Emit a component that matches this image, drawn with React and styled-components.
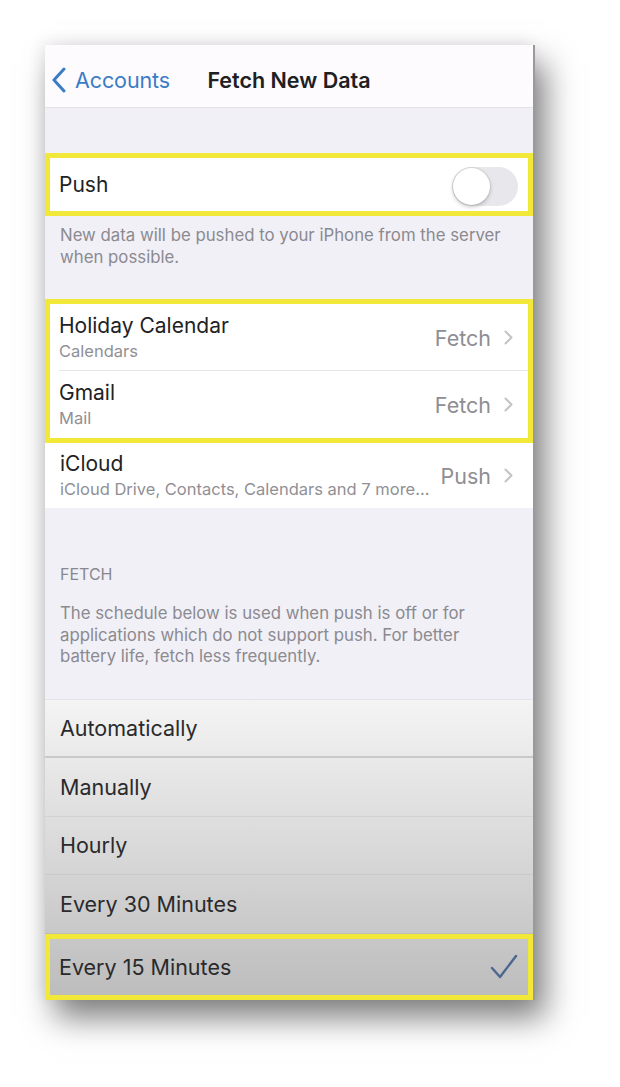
import React from "react";
import styled, { createGlobalStyle } from "styled-components";

const GlobalStyle = createGlobalStyle`
  html, body { margin: 0; padding: 0; background: #ffffff; }
  body { font-family: Inter, "Noto Sans", "Liberation Sans", sans-serif; -webkit-font-smoothing: antialiased; }
  * { box-sizing: border-box; }
`;

const Page = styled.div`
  width: 620px;
  height: 1087px;
  padding: 45px 0 0 45px;
  background: #ffffff;
  overflow: hidden;
`;

const Phone = styled.div`
  width: 490px;
  height: 955px;
  background: #f1f0f6;
  display: flex;
  flex-direction: column;
  overflow: hidden;
  border-right: 2px solid #9a9a9a;
  box-shadow: 10px 18px 30px rgba(0, 0, 0, 0.5), -3px -3px 14px rgba(0, 0, 0, 0.07);
`;

const NavBar = styled.div`
  height: 63px;
  flex: none;
  background: #fdfbfe;
  border-bottom: 1px solid #e2e1e6;
  display: grid;
  grid-template-columns: 1fr auto 1fr;
  align-items: center;
  padding: 7px 6px 0;
`;

const BackButton = styled.div`
  display: flex;
  align-items: center;
  gap: 8px;
  color: #3b7cc6;
  font-size: 21.5px;
  letter-spacing: -0.1px;
`;

const NavTitle = styled.div`
  font-size: 21.5px;
  font-weight: 600;
  color: #202022;
  letter-spacing: 0px;
`;

const Spacer = styled.div`
  height: ${(p) => p.$h}px;
  flex: none;
`;

const Highlight = styled.div`
  border: 5px solid #f2e83a;
  background: #ffffff;
  flex: none;
`;

const SingleRow = styled.div`
  height: ${(p) => p.$h}px;
  display: flex;
  align-items: center;
  justify-content: space-between;
  padding: 0 10px 0 9px;
  background: #ffffff;
`;

const Label = styled.div`
  font-size: 21px;
  color: #222224;
`;

const Toggle = styled.div`
  width: 66px;
  height: 39px;
  border-radius: 20px;
  background: #e8e7ec;
  position: relative;
  margin-top: 4px;
`;

const Knob = styled.div`
  position: absolute;
  left: 1px;
  top: 1px;
  width: 37px;
  height: 37px;
  border-radius: 50%;
  background: #ffffff;
  box-shadow: 0 2px 4px rgba(0, 0, 0, 0.22), 0 0 0 1px rgba(0, 0, 0, 0.06);
`;

const Footer = styled.div`
  padding: ${(p) => p.$pad};
  font-size: 16.8px;
  line-height: 21.5px;
  color: #8b8a90;
  flex: none;
`;

const SectionHeader = styled.div`
  padding: 0 15px;
  font-size: 16px;
  line-height: 20px;
  color: #89888e;
  flex: none;
`;

const AccountRow = styled.div`
  height: ${(p) => p.$h}px;
  display: flex;
  align-items: center;
  justify-content: space-between;
  gap: 4px;
  padding: 0 ${(p) => p.$pr}px 0 ${(p) => p.$pl}px;
  background: #ffffff;
  position: relative;
  ${(p) =>
    p.$sep &&
    `&::after { content: ""; position: absolute; left: ${p.$pl}px; right: 0; bottom: 0; height: 1px; background: #e6e5ea; }`}
`;

const AccountText = styled.div`
  display: flex;
  flex-direction: column;
  gap: 3px;
  min-width: 0;
  margin-top: -2px;
`;

const AccountTitle = styled.div`
  font-size: 21px;
  color: #222224;
  line-height: 25px;
`;

const AccountSub = styled.div`
  font-size: 16.5px;
  color: #909095;
  line-height: 20px;
  white-space: nowrap;
  overflow: hidden;
`;

const Detail = styled.div`
  display: flex;
  align-items: center;
  gap: 13px;
  font-size: 21.5px;
  color: #8e8e93;
  flex: none;
`;

const List = styled.div`
  flex: 1;
  display: flex;
  flex-direction: column;
  background: linear-gradient(#f4f4f4 0%, #e6e6e6 25%, #d6d6d6 55%, #c4c4c4 85%, #bcbcbc 100%);
  border-top: 1px solid #e4e4e8;
`;

const Option = styled.div`
  height: ${(p) => p.$h}px;
  display: flex;
  align-items: center;
  justify-content: space-between;
  padding: 0 15px;
  border-bottom: ${(p) => p.$line};
  flex: none;
`;

const SelectedBox = styled.div`
  border: 5px solid #f2e83a;
  flex: 1;
  display: flex;
  align-items: center;
  justify-content: space-between;
  padding: 0 10px 0 9px;
`;

const OptionText = styled.div`
  font-size: 21.5px;
  color: #2a2a2c;
`;

const BackChevron = () => (
  <svg width="16" height="26" viewBox="0 0 16 26">
    <polyline points="13,2 3,13 13,24" fill="none" stroke="#3b7cc6" strokeWidth="3" strokeLinecap="round" strokeLinejoin="round" />
  </svg>
);

const Chevron = () => (
  <svg width="9" height="15" viewBox="0 0 9 15">
    <polyline points="1.5,1.5 7.5,7.5 1.5,13.5" fill="none" stroke="#c3c3c8" strokeWidth="2" strokeLinecap="round" strokeLinejoin="round" />
  </svg>
);

const Check = () => (
  <svg width="28" height="26" viewBox="0 0 28 26">
    <polyline points="2,14 10,23 26,2" fill="none" stroke="#4b6790" strokeWidth="2.4" strokeLinecap="round" strokeLinejoin="round" />
  </svg>
);

const accounts = [
  { title: "Holiday Calendar", sub: "Calendars", value: "Fetch" },
  { title: "Gmail", sub: "Mail", value: "Fetch" },
];

const options = ["Automatically", "Manually", "Hourly", "Every 30 Minutes"];

export default function App() {
  return (
    <>
      <GlobalStyle />
      <Page>
        <Phone>
          <NavBar>
            <BackButton>
              <BackChevron />
              Accounts
            </BackButton>
            <NavTitle>Fetch New Data</NavTitle>
            <div />
          </NavBar>
          <Spacer $h={45} />
          <Highlight>
            <SingleRow $h={53}>
              <Label>Push</Label>
              <Toggle>
                <Knob />
              </Toggle>
            </SingleRow>
          </Highlight>
          <Footer $pad="9px 20px 31px 15px">
            New data will be pushed to your iPhone from the server when possible.
          </Footer>
          <Highlight>
            {accounts.map((a, i) => (
              <AccountRow key={a.title} $h={67} $pl={9} $pr={15} $sep={i === 0}>
                <AccountText>
                  <AccountTitle>{a.title}</AccountTitle>
                  <AccountSub>{a.sub}</AccountSub>
                </AccountText>
                <Detail>
                  {a.value}
                  <Chevron />
                </Detail>
              </AccountRow>
            ))}
          </Highlight>
          <AccountRow $h={65} $pl={15} $pr={20}>
            <AccountText>
              <AccountTitle>iCloud</AccountTitle>
              <AccountSub>iCloud Drive, Contacts, Calendars and 7 more...</AccountSub>
            </AccountText>
            <Detail>
              Push
              <Chevron />
            </Detail>
          </AccountRow>
          <Spacer $h={56} />
          <SectionHeader>FETCH</SectionHeader>
          <Footer $pad="19px 40px 31px 15px">
            The schedule below is used when push is off or for applications which do not support push. For better battery life, fetch less frequently.
          </Footer>
          <List>
            {options.map((o, i) => (
              <Option
                key={o}
                $h={58.5}
                $line={i === 0 ? "2px solid #c9c9c9" : "1px solid rgba(0,0,0,0.05)"}
              >
                <OptionText>{o}</OptionText>
              </Option>
            ))}
            <SelectedBox>
              <OptionText>Every 15 Minutes</OptionText>
              <Check />
            </SelectedBox>
          </List>
        </Phone>
      </Page>
    </>
  );
}
